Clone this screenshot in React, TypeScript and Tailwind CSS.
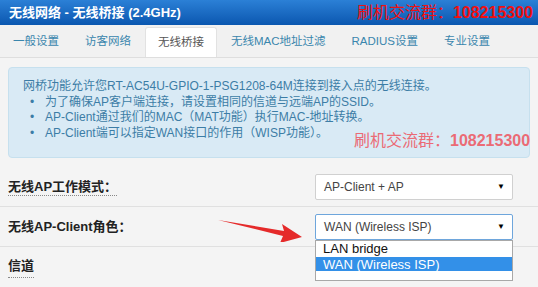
const tabs = ['一般设置', '访客网络', '无线桥接', '无线MAC地址过滤', 'RADIUS设置', '专业设置']

const notes = [
  '为了确保AP客户端连接，请设置相同的信道与远端AP的SSID。',
  'AP-Client通过我们的MAC（MAT功能）执行MAC-地址转换。',
  'AP-Client端可以指定WAN接口的作用（WISP功能）。',
]

const sans = "font-['Liberation_Sans','Noto_Sans_CJK_SC',sans-serif]"

const Watermark = ({ className }: { className: string }) => (
  <div className={`flex items-center text-[16px] leading-none whitespace-nowrap ${className}`}>
    <span className="font-['Liberation_Serif','Noto_Sans_CJK_SC',serif]">刷机交流群：</span>
    <span className="font-['Liberation_Sans',sans-serif] font-bold">108215300</span>
  </div>
)

const SelectBox = ({ value, focused }: { value: string; focused?: boolean }) => (
  <div
    className={`flex items-center justify-between w-[198px] h-[26px] pl-[8px] pr-[7px] bg-white rounded-[2px] border text-[12px] text-[#444] ${
      focused ? 'border-[#6ea6dc]' : 'border-[#d0d0d0]'
    }`}
  >
    <span>{value}</span>
    <span className="text-[8px] text-black">▼</span>
  </div>
)

export default function App() {
  return (
    <div className={`w-[538px] h-[287px] overflow-hidden bg-[#f4f4f4] ${sans}`}>
      {/* Header */}
      <div className="h-[25px] flex items-center justify-between pl-[9px] pr-[5px] bg-gradient-to-b from-[#2b80d6] to-[#0a57b0]">
        <span className="text-white font-bold text-[13px]">无线网络 - 无线桥接 (2.4GHz)</span>
        <Watermark className="text-[#f01010]" />
      </div>

      {/* Tabs */}
      <div className="h-[33px] flex items-end pl-[1px] bg-[#f1f1f1] border-b border-[#dedede]">
        {tabs.map((t) => (
          <div
            key={t}
            className={`h-[30px] mr-[2px] px-[12px] flex items-center text-[11.5px] ${
              t === '无线桥接'
                ? 'bg-white text-[#555] border border-b-0 border-[#e2e2e2] rounded-t-[3px]'
                : 'text-[#3a86ad]'
            }`}
          >
            {t}
          </div>
        ))}
      </div>

      {/* Info box */}
      <div className="px-[8px] pt-[9px]">
        <div className="relative h-[91px] pt-[11px] pl-[14px] rounded-[4px] bg-[#d9eaf5] border border-[#c6e0ee] text-[12px] leading-[15.5px] text-[#3c7da6]">
          <div>网桥功能允许您RT-AC54U-GPIO-1-PSG1208-64M连接到接入点的无线连接。</div>
          {notes.map((n) => (
            <div key={n} className="flex">
              <span className="w-[22px] pl-[7px]">•</span>
              <span>{n}</span>
            </div>
          ))}
          <Watermark className="absolute left-[345px] top-[65px] text-[#eb6b75]" />
        </div>
      </div>

      {/* Form rows */}
      <div className="mt-[9px] text-[13px] text-[#222]">
        <div className="h-[40px] flex items-center border-b border-[#e0e0e0] px-[8px]">
          <div className="w-[307px]">
            <span className="font-bold border-b border-dotted border-[#888] pb-[1px]">无线AP工作模式：</span>
          </div>
          <SelectBox value="AP-Client + AP" />
        </div>
        <div className="relative h-[40px] flex items-center border-b border-[#e0e0e0] px-[8px]">
          <div className="w-[307px]">
            <span className="font-bold">无线AP-Client角色：</span>
          </div>
          <div className="relative">
            <SelectBox value="WAN (Wireless ISP)" focused />
            <div className="absolute left-0 top-[26px] z-10 w-[198px] bg-white border border-[#a8a8a8] text-[13px] leading-[15px] text-[#111]">
              <div className="pl-[7px] h-[16px]">LAN bridge</div>
              <div className="pl-[7px] h-[14px] bg-[#3390e8] text-white">WAN (Wireless ISP)</div>
              <div className="h-[9px]" />
            </div>
          </div>
          {/* arrow */}
          <svg className="absolute left-[216px] top-[5px]" width="90" height="30" viewBox="0 0 90 30">
            <path d="M2 8 L68 19 L66 12 L86 25 L64 31 L67 24 Z" fill="#e52a2a" />
          </svg>
        </div>
        <div className="h-[40px] flex items-center px-[8px]">
          <span className="font-bold border-b border-dotted border-[#888] pb-[1px]">信道</span>
        </div>
      </div>
    </div>
  )
}
